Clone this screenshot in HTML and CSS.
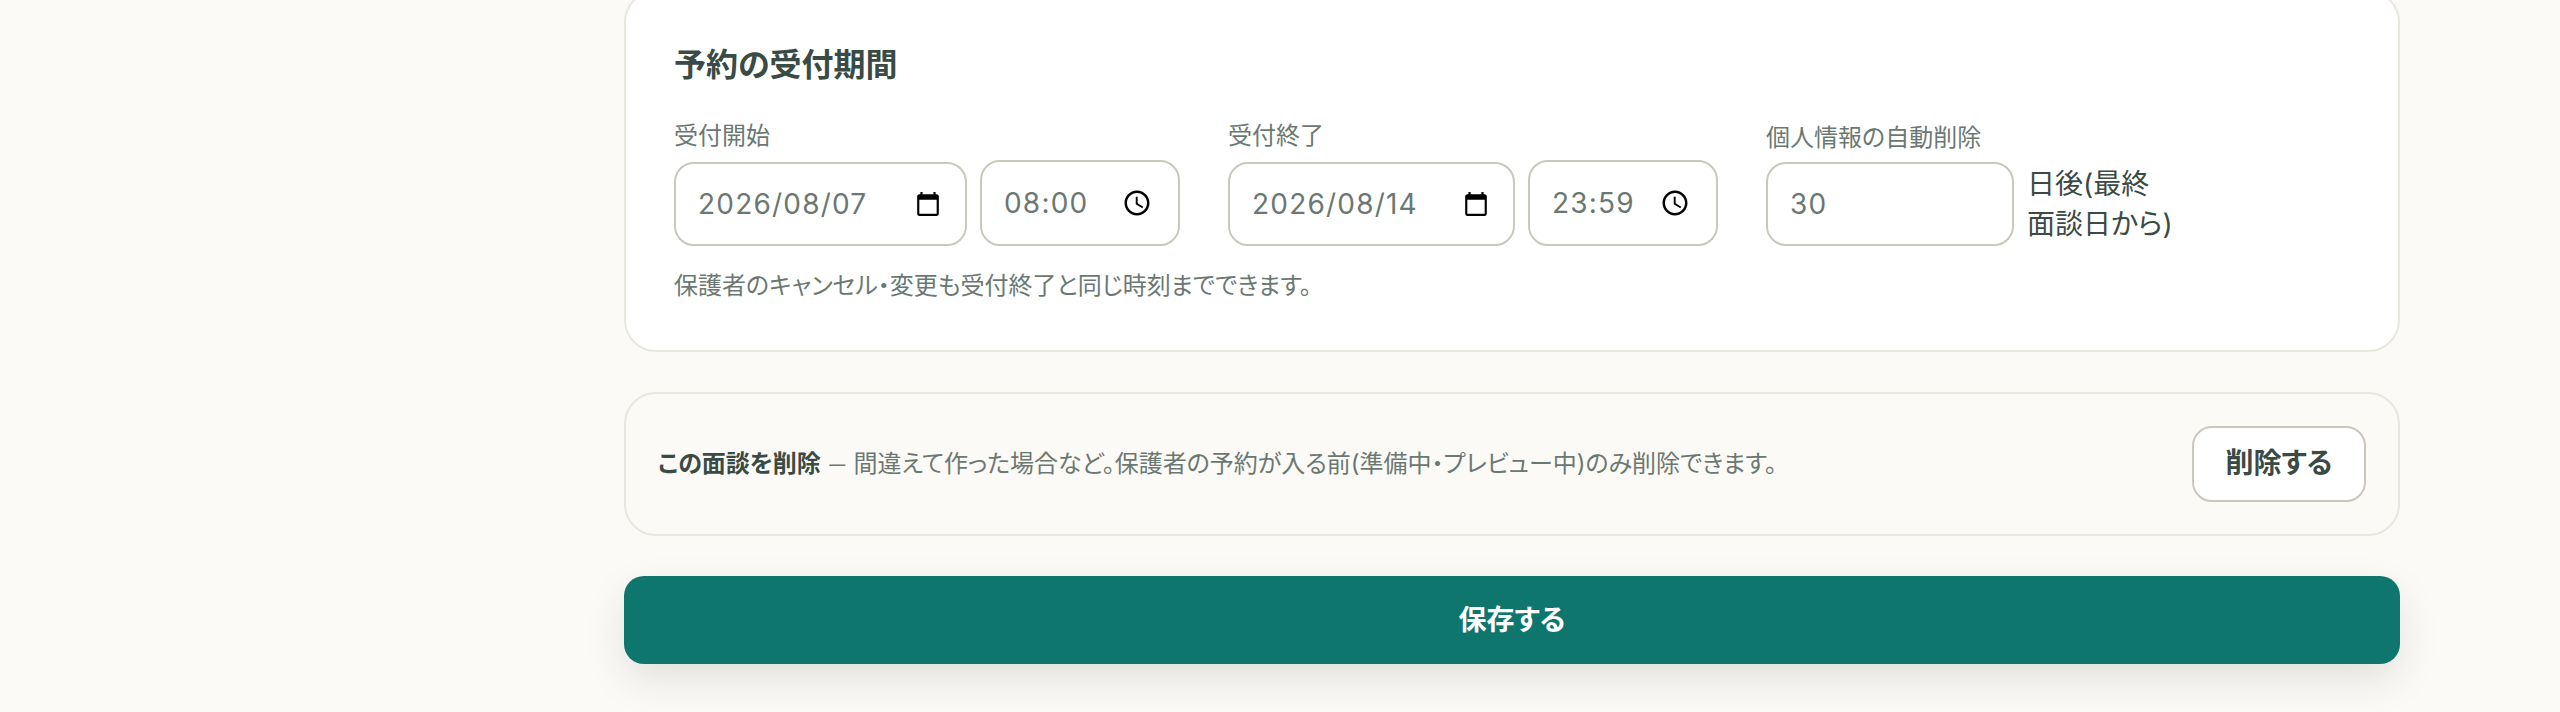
FILE: index.html
```html
<!DOCTYPE html>
<html lang="ja">
<head>
  <meta charset="UTF-8" />
  <meta name="viewport" content="width=device-width, initial-scale=1.0"/>
  <title>面談の設定</title>
  <link rel="stylesheet" href="styles.css">
</head>
<body>
  <main class="main">
    <section class="card">
      <h2>予約の受付期間</h2>
      <div class="fields">
        <div class="field">
          <label>受付開始</label>
          <div class="inputs">
            <div class="input date">
              <span>2026/08/07</span>
              <svg class="icon-date" viewBox="0 0 24 24"><path d="M20 3h-1V1h-2v2H7V1H5v2H4c-1.1 0-2 .9-2 2v16c0 1.1.9 2 2 2h16c1.1 0 2-.9 2-2V5c0-1.1-.9-2-2-2zm0 18H4V8h16v13z"/></svg>
            </div>
            <div class="input time">
              <span>08:00</span>
              <svg class="icon-time" viewBox="0 0 24 24"><path d="M11.99 2C6.47 2 2 6.48 2 12s4.47 10 9.99 10C17.52 22 22 17.52 22 12S17.52 2 11.99 2zM12 20c-4.42 0-8-3.58-8-8s3.58-8 8-8 8 3.58 8 8-3.58 8-8 8z"/><path d="M12.5 7H11v6l5.25 3.15.75-1.23-4.5-2.67z"/></svg>
            </div>
          </div>
        </div>
        <div class="field">
          <label>受付終了</label>
          <div class="inputs">
            <div class="input date end">
              <span>2026/08/14</span>
              <svg class="icon-date" viewBox="0 0 24 24"><path d="M20 3h-1V1h-2v2H7V1H5v2H4c-1.1 0-2 .9-2 2v16c0 1.1.9 2 2 2h16c1.1 0 2-.9 2-2V5c0-1.1-.9-2-2-2zm0 18H4V8h16v13z"/></svg>
            </div>
            <div class="input time end">
              <span>23:59</span>
              <svg class="icon-time" viewBox="0 0 24 24"><path d="M11.99 2C6.47 2 2 6.48 2 12s4.47 10 9.99 10C17.52 22 22 17.52 22 12S17.52 2 11.99 2zM12 20c-4.42 0-8-3.58-8-8s3.58-8 8-8 8 3.58 8 8-3.58 8-8 8z"/><path d="M12.5 7H11v6l5.25 3.15.75-1.23-4.5-2.67z"/></svg>
            </div>
          </div>
        </div>
        <div class="field">
          <label>個人情報の自動削除</label>
          <div class="inputs centered">
            <div class="input days"><span>30</span></div>
            <span class="unit">日後(最終 面談日から)</span>
          </div>
        </div>
      </div>
      <p class="note">保護者のキャンセル・変更も受付終了と同じ時刻までできます。</p>
    </section>

    <section class="danger">
      <p><strong>この面談を削除</strong> <span class="dash">—</span> 間違えて作った場合など。保護者の予約が入る前(準備中・プレビュー中)のみ削除できます。</p>
      <button class="delete-btn">削除する</button>
    </section>

    <button class="save-btn">保存する</button>
  </main>
</body>
</html>
```

FILE: styles.css
```css
:root {
  --bg: #fbfaf6;
  --card: #ffffff;
  --text: #3a4a45;
  --muted: #6b7872;
  --line: #e8e6df;
  --input-line: #cac8bd;
  --accent: #0f766e;
}

* {
  box-sizing: border-box;
}

html, body {
  height: 100%;
  overflow: hidden;
}

body {
  margin: 0;
  background: var(--bg);
  color: var(--text);
  font-family: Inter, "Noto Sans CJK JP", sans-serif;
  font-feature-settings: "palt";
  font-size: 28px;
}

.main {
  width: 1776px;
  margin: -10px 0 0 624px;
}

.card {
  background: var(--card);
  border: 2px solid var(--line);
  border-radius: 32px;
  padding: 48px 48px 46px;
  margin-bottom: 40px;
}

h2 {
  margin: 2px 0 30px;
  font-size: 32px;
  line-height: 46px;
  font-weight: 700;
}

.fields {
  display: flex;
  align-items: flex-end;
  gap: 48px;
}

label {
  display: block;
  margin-bottom: 6px;
  font-size: 24px;
  line-height: 36px;
  color: var(--muted);
}

.inputs {
  display: flex;
  align-items: flex-end;
  gap: 13px;
}

.inputs.centered {
  align-items: center;
}

.input {
  display: flex;
  align-items: center;
  justify-content: space-between;
  height: 84px;
  padding: 0 24px 0 22px;
  background: #fff;
  border: 2px solid var(--input-line);
  border-radius: 20px;
  color: var(--muted);
  letter-spacing: 1.2px;
}

.date { width: 293px; }
.time { width: 200px; height: 86px; padding-right: 27px; }
.date.end { width: 287px; }
.time.end { width: 190px; }
.days { width: 248px; }

.icon-date {
  width: 26px;
  height: 26px;
}

.icon-time {
  width: 30px;
  height: 30px;
  margin-right: -1px;
}

.unit {
  width: 150px;
  line-height: 40px;
}

.note {
  margin: 22px 0 0;
  font-size: 24px;
  line-height: 36px;
  color: var(--muted);
}

.danger {
  display: flex;
  align-items: center;
  justify-content: space-between;
  border: 2px solid var(--line);
  border-radius: 32px;
  padding: 32px;
  margin-bottom: 40px;
}

.danger p {
  margin: 0;
  padding-bottom: 6px;
  font-size: 24px;
  color: var(--muted);
}

.danger strong {
  color: var(--text);
}

.dash {
  font-family: Lato, sans-serif;
}

.delete-btn {
  width: 174px;
  height: 76px;
  padding: 0 0 6px;
  background: #fff;
  border: 2px solid var(--input-line);
  border-radius: 20px;
  color: var(--text);
  font: inherit;
  font-feature-settings: "palt";
  font-weight: 700;
}

.save-btn {
  display: block;
  width: 100%;
  height: 88px;
  padding: 0 0 5px;
  background: var(--accent);
  border: none;
  border-radius: 20px;
  color: #fff;
  font: inherit;
  font-feature-settings: "palt";
  font-weight: 700;
  box-shadow: 0 16px 40px rgba(0, 0, 0, 0.1);
}
```
